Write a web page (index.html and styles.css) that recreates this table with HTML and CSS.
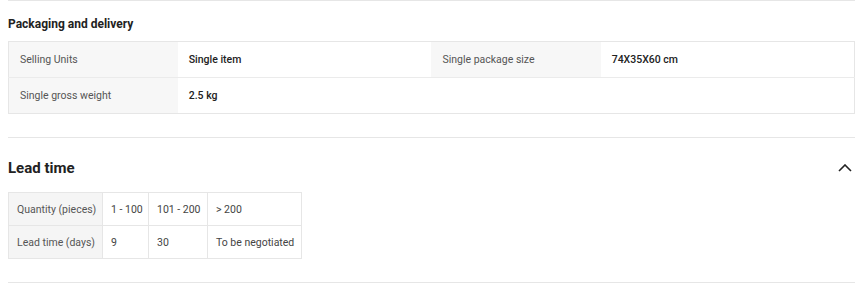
FILE: index.html
```html
<!DOCTYPE html>
<html lang="en">
<head>
    <meta charset="UTF-8">
    <title>Product details</title>
    <link rel="stylesheet" href="styles.css">
</head>
<body>

<div class="details">

    <!-- Packaging -->
    <section class="block packaging">
        <h3>Packaging and delivery</h3>
        <table class="attr-table">
            <colgroup>
                <col class="w-label"><col class="w-value"><col class="w-label"><col class="w-value">
            </colgroup>
            <tr>
                <td class="label">Selling Units</td>
                <td class="value">Single item</td>
                <td class="label">Single package size</td>
                <td class="value">74X35X60 cm</td>
            </tr>
            <tr>
                <td class="label">Single gross weight</td>
                <td class="value">2.5 kg</td>
                <td></td>
                <td></td>
            </tr>
        </table>
    </section>

    <!-- Lead time -->
    <section class="block lead">
        <div class="block-head">
            <h2>Lead time</h2>
            <svg class="chevron" width="14" height="8" viewBox="0 0 14 8">
                <path d="M1 7 L7 1 L13 7" fill="none" stroke="#222" stroke-width="1.6"/>
            </svg>
        </div>
        <table class="lead-table">
            <colgroup>
                <col class="c-label"><col class="c-1"><col class="c-2"><col class="c-3">
            </colgroup>
            <tr>
                <td class="label">Quantity (pieces)</td>
                <td>1 - 100</td>
                <td>101 - 200</td>
                <td>&gt; 200</td>
            </tr>
            <tr>
                <td class="label">Lead time (days)</td>
                <td>9</td>
                <td>30</td>
                <td>To be negotiated</td>
            </tr>
        </table>
    </section>

</div>

</body>
</html>
```

FILE: styles.css
```css
body {
    font-family: Roboto, "Noto Sans", sans-serif;
    background-color: #fff;
    color: #222;
    margin: 0;
    padding: 0;
}
.details {
    padding: 0 9px 0 8px;
}
.block {
    border-top: 1px solid #e6e6e6;
}
.packaging {
    padding: 15px 0 23px;
}
.packaging h3 {
    font-size: 12px;
    font-weight: 700;
    line-height: 16px;
    margin: 0 0 9px;
}
.attr-table {
    width: 100%;
    border-collapse: collapse;
    table-layout: fixed;
    border: 1px solid #e6e6e6;
    font-size: 10.5px;
}
.w-label { width: 20%; }
.w-value { width: 30%; }
.attr-table td {
    height: 35px;
    padding: 0 11px;
}
.attr-table tr + tr td {
    border-top: 1px solid #ebebeb;
}
.attr-table .label {
    background-color: #f7f7f7;
    color: #555;
}
.attr-table .value {
    font-weight: 500;
    color: #222;
}
.lead {
    padding: 0 0 23px;
    border-bottom: 1px solid #e6e6e6;
}
.block-head {
    display: flex;
    justify-content: space-between;
    align-items: center;
    height: 48px;
    padding: 6px 3px 0 0;
}
.block-head h2 {
    font-size: 15px;
    font-weight: 700;
    margin: 0;
}
.lead-table {
    border-collapse: collapse;
    table-layout: fixed;
    width: 293px;
    font-size: 10.5px;
    color: #444;
}
.c-label { width: 94px; }
.c-1 { width: 46px; }
.c-2 { width: 59px; }
.c-3 { width: 94px; }
.lead-table td {
    border: 1px solid #e6e6e6;
    height: 32px;
    padding: 0 8px;
    white-space: nowrap;
}
.lead-table .label {
    background-color: #f5f5f5;
    color: #555;
}
```
